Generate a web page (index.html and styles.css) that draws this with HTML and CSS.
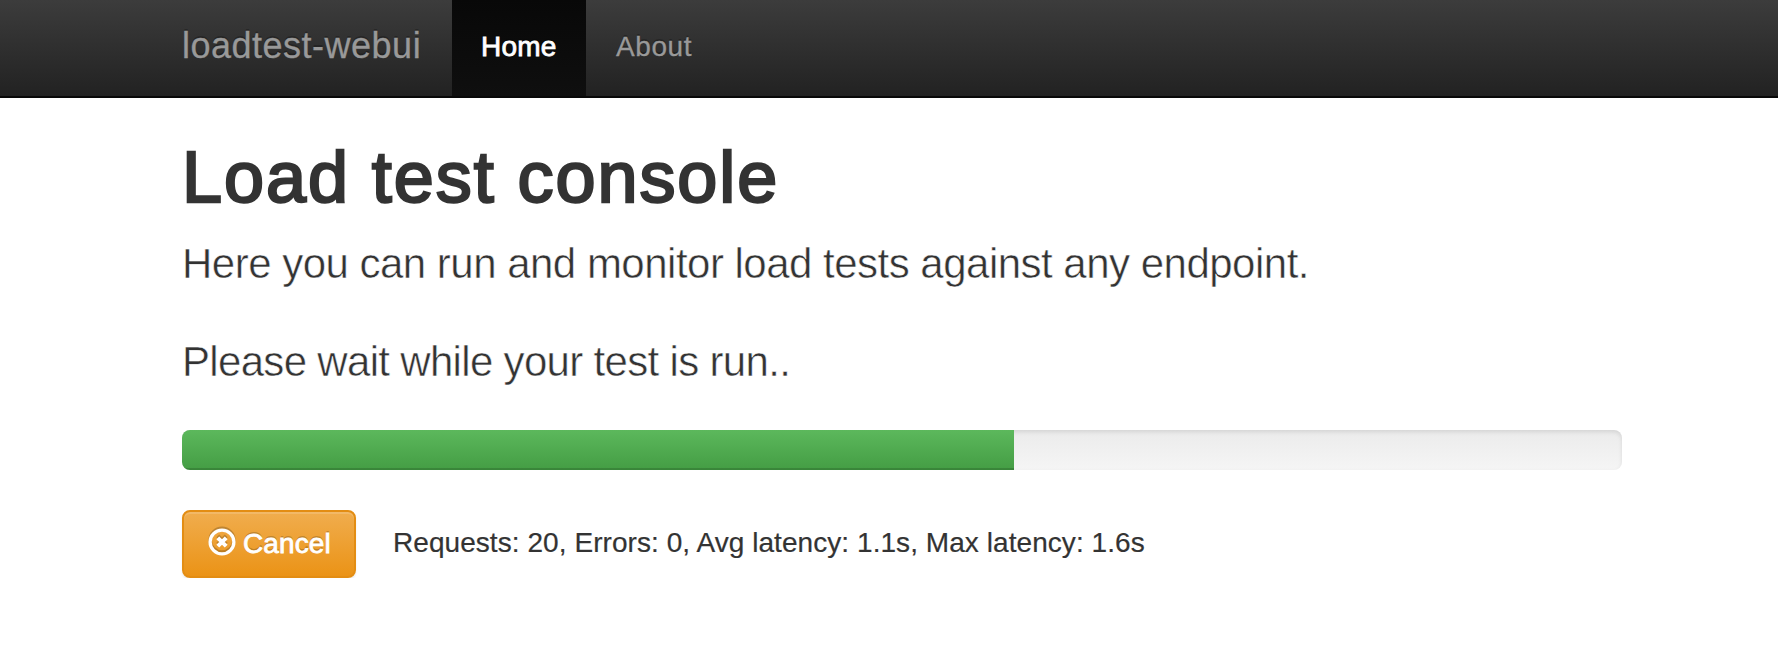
FILE: index.html
```html
<!DOCTYPE html>
<html lang="en">
<head>
<meta charset="utf-8">
<title>loadtest-webui</title>
<link rel="stylesheet" href="styles.css">
</head>
<body>
<nav class="navbar">
  <div class="container navbar-inner">
    <a class="brand">loadtest-webui</a>
    <a class="nav-link active"><span class="home">Home</span></a>
    <a class="nav-link"><span class="about">About</span></a>
  </div>
</nav>
<main class="container">
  <h1><span>Load test console</span></h1>
  <p class="lead"><span class="intro">Here you can run and monitor load tests against any endpoint.</span></p>
  <p class="lead"><span class="wait">Please wait while your test is run..</span></p>
  <div class="progress"><div class="progress-bar" style="width: 57.8%"></div></div>
  <div class="actions">
    <button class="btn" type="button">
      <svg class="icon" viewBox="0 0 28 30" width="28" height="30">
        <g class="icon-shadow" transform="translate(0 -2)"><circle cx="14" cy="15" r="11.9"/><path d="M9.8 10.8l8.4 8.4M18.2 10.8l-8.4 8.4"/></g>
        <g class="icon-face"><circle cx="14" cy="15" r="11.9"/><path d="M9.8 10.8l8.4 8.4M18.2 10.8l-8.4 8.4"/></g>
      </svg>
      <span class="cancel">Cancel</span>
    </button>
    <span class="stats">Requests: 20, Errors: 0, Avg latency: 1.1s, Max latency: 1.6s</span>
  </div>
</main>
</body>
</html>
```
FILE: styles.css
```css
* { box-sizing: border-box; }
body {
  margin: 0;
  background: #fff;
  color: #333;
  font: 28px/40px "Liberation Sans", Arial, sans-serif;
  overflow: hidden;
}
.container { width: 1440px; margin: 0 0 0 182px; }
.navbar {
  height: 98px;
  border-bottom: 2px solid #080808;
  background: linear-gradient(#3c3c3c, #222);
}
.navbar-inner { display: flex; height: 98px; }
.brand {
  width: 270px;
  padding-top: 26px;
  font-size: 36px;
  letter-spacing: 0.5px;
  white-space: nowrap;
  color: #999;
  -webkit-text-stroke: 0.3px #999;
  text-shadow: 0 -2px 0 rgba(0, 0, 0, .25);
}
.nav-link {
  height: 96px;
  padding: 27px 30px 29px;
  color: #999;
  text-shadow: 0 -2px 0 rgba(0, 0, 0, .25);
}
.nav-link.active {
  width: 134px;
  padding-left: 29px;
  color: #fff;
  background: linear-gradient(#080808, #0f0f0f);
}
.home { letter-spacing: 0.2px; -webkit-text-stroke: 0.8px #fff; }
.about { letter-spacing: 0.6px; -webkit-text-stroke: 0.3px #999; }
h1 {
  margin: 39px 0 17px;
  font-size: 72px;
  line-height: 80px;
  font-weight: 400;
  letter-spacing: 1.93px;
  -webkit-text-stroke: 2.4px #333;
  white-space: nowrap;
}
.lead {
  margin: 0 0 38px;
  font-size: 42px;
  line-height: 60px;
  white-space: nowrap;
  -webkit-text-stroke: 0.5px #fff;
}
.intro { letter-spacing: -0.51px; }
.wait { letter-spacing: -0.68px; }
.progress {
  height: 40px;
  overflow: hidden;
  border-radius: 8px;
  background: linear-gradient(#ebebeb, #f5f5f5);
  box-shadow: inset 0 2px 4px rgba(0, 0, 0, .1);
}
.progress-bar {
  height: 100%;
  background: linear-gradient(#5cb85c, #449d44);
  box-shadow: inset 0 -2px 0 rgba(0, 0, 0, .15);
}
.actions { display: flex; margin-top: 40px; }
.btn {
  display: flex;
  width: 174px;
  height: 68px;
  padding: 14px 0 0 24px;
  border: 2px solid #e38d13;
  border-radius: 8px;
  background: linear-gradient(#f0ad4e, #eb9316);
  box-shadow: inset 0 2px 0 rgba(255, 255, 255, .15), 0 2px 2px rgba(0, 0, 0, .075);
  color: #fff;
  font: inherit;
  text-shadow: 0 -2px 0 rgba(0, 0, 0, .2);
}
.icon { margin: 1px 7px 0 0; overflow: visible; }
.icon g { fill: none; stroke-width: 3.3; }
.icon path { stroke-width: 4; }
.icon-shadow { stroke: #000; opacity: .2; }
.icon-face { stroke: #fff; }
.cancel { line-height: 36px; letter-spacing: 0.1px; -webkit-text-stroke: 0.8px #fff; }
.stats {
  margin: 13px 0 0 37px;
  letter-spacing: 0.06px;
  white-space: nowrap;
  -webkit-text-stroke: 0.2px #333;
}
```
